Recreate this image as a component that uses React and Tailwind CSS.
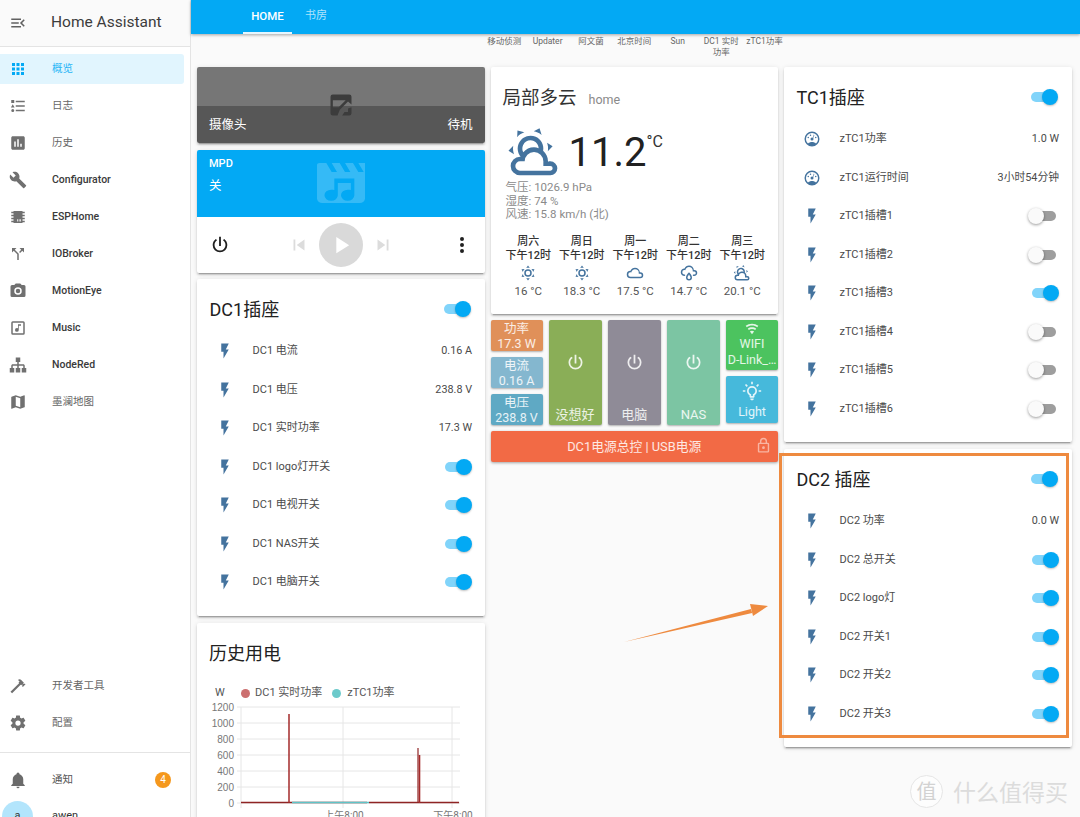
import React from "react";

const P = {
  menuOpen: "M21,15.61L19.59,17L14.58,12L19.59,7L21,8.39L17.44,12L21,15.61M3,6H16V8H3V6M3,13V11H13V13H3M3,18V16H16V18H3Z",
  grid: "M16,20H20V16H16M16,14H20V10H16M10,8H14V4H10M16,8H20V4H16M10,14H14V10H10M4,14H8V10H4M4,20H8V16H4M10,20H14V16H10M4,8H8V4H4V8Z",
  list: "M5,9.5L7.5,14H2.5L5,9.5M3,4H7V8H3V4M5,20A2,2 0 0,0 7,18A2,2 0 0,0 5,16A2,2 0 0,0 3,18A2,2 0 0,0 5,20M9,5V7H21V5H9M9,19H21V17H9V19M9,13H21V11H9V13Z",
  chart: "M19,3H5C3.9,3 3,3.9 3,5V19C3,20.1 3.9,21 5,21H19C20.1,21 21,20.1 21,19V5C21,3.9 20.1,3 19,3M9,17H7V10H9V17M13,17H11V7H13V17M17,17H15V13H17V17Z",
  wrench: "M22.7,19L13.6,9.9C14.5,7.6 14,4.9 12.1,3C10.1,1 7.1,0.6 4.7,1.7L9,6L6,9L1.6,4.7C0.4,7.1 0.9,10.1 2.9,12.1C4.8,14 7.5,14.5 9.8,13.6L18.9,22.7C19.3,23.1 19.9,23.1 20.3,22.7L22.6,20.4C23.1,20 23.1,19.3 22.7,19Z",
  chip: "M6,4H18V5H21V7H18V9H21V11H18V13H21V15H18V17H21V19H18V20H6V19H3V17H6V15H3V13H6V11H3V9H6V7H3V5H6V4M11,15V18H12V15H11M13,15V18H14V15H13M15,15V18H16V15H15Z",
  split: "M14,4L16.29,6.29L13.41,9.17L14.83,10.59L17.71,7.71L20,10V4M10,4H4V10L6.29,7.71L11,12.41V20H13V11.59L7.71,6.29",
  camera: "M4,4H7L9,2H15L17,4H20A2,2 0 0,1 22,6V18A2,2 0 0,1 20,20H4A2,2 0 0,1 2,18V6A2,2 0 0,1 4,4M12,7A5,5 0 0,0 7,12A5,5 0 0,0 12,17A5,5 0 0,0 17,12A5,5 0 0,0 12,7M12,9A3,3 0 0,1 15,12A3,3 0 0,1 12,15A3,3 0 0,1 9,12A3,3 0 0,1 12,9Z",
  music: "M16,9H13V14.5A2.5,2.5 0 0,1 10.5,17A2.5,2.5 0 0,1 8,14.5A2.5,2.5 0 0,1 10.5,12C11.07,12 11.58,12.19 12,12.5V7H16V9M19,3A2,2 0 0,1 21,5V19A2,2 0 0,1 19,21H5A2,2 0 0,1 3,19V5A2,2 0 0,1 5,3H19M5,5V19H19V5H5Z",
  sitemap: "M9,2V8H11V11H5C3.89,11 3,11.89 3,13V16H1V22H7V16H5V13H11V16H9V22H15V16H13V13H19V16H17V22H23V16H21V13C21,11.89 20.11,11 19,11H13V8H15V2H9Z",
  map: "M15,19L9,16.89V5L15,7.11M20.5,3C20.44,3 20.39,3 20.34,3L15,5.1L9,3L3.36,4.9C3.15,4.97 3,5.15 3,5.38V20.5A0.5,0.5 0 0,0 3.5,21C3.55,21 3.61,21 3.66,20.97L9,18.9L15,21L20.64,19.1C20.85,19 21,18.85 21,18.62V3.5A0.5,0.5 0 0,0 20.5,3Z",
  hammer: "M2 19.63L13.43 8.2L12.72 7.5L14.14 6.07L12 3.89C13.2 2.7 15.09 2.7 16.27 3.89L19.87 7.5L18.45 8.91H21.29L22 9.62L18.45 13.21L17.74 12.5V9.62L16.27 11.04L15.56 10.33L4.13 21.76L2 19.63Z",
  cog: "M12,15.5A3.5,3.5 0 0,1 8.5,12A3.5,3.5 0 0,1 12,8.5A3.5,3.5 0 0,1 15.5,12A3.5,3.5 0 0,1 12,15.5M19.43,12.97C19.47,12.65 19.5,12.33 19.5,12C19.5,11.67 19.47,11.34 19.43,11L21.54,9.37C21.73,9.22 21.78,8.95 21.66,8.73L19.66,5.27C19.54,5.05 19.27,4.96 19.05,5.05L16.56,6.05C16.04,5.66 15.5,5.32 14.87,5.07L14.5,2.42C14.46,2.18 14.25,2 14,2H10C9.75,2 9.54,2.18 9.5,2.42L9.13,5.07C8.5,5.32 7.96,5.66 7.44,6.05L4.95,5.05C4.73,4.96 4.46,5.05 4.34,5.27L2.34,8.73C2.21,8.95 2.27,9.22 2.46,9.37L4.57,11C4.53,11.34 4.5,11.67 4.5,12C4.5,12.33 4.53,12.65 4.57,12.97L2.46,14.63C2.27,14.78 2.21,15.05 2.34,15.27L4.34,18.73C4.46,18.95 4.73,19.03 4.95,18.95L7.44,17.94C7.96,18.34 8.5,18.68 9.13,18.93L9.5,21.58C9.54,21.82 9.75,22 10,22H14C14.25,22 14.46,21.82 14.5,21.58L14.87,18.93C15.5,18.67 16.04,18.34 16.56,17.94L19.05,18.95C19.27,19.03 19.54,18.95 19.66,18.73L21.66,15.27C21.78,15.05 21.73,14.78 21.54,14.63L19.43,12.97Z",
  bell: "M21,19V20H3V19L5,17V11C5,7.9 7.03,5.17 10,4.29C10,4.19 10,4.1 10,4A2,2 0 0,1 12,2A2,2 0 0,1 14,4C14,4.1 14,4.19 14,4.29C16.97,5.17 19,7.9 19,11V17L21,19M14,21A2,2 0 0,1 12,23A2,2 0 0,1 10,21",
  power: "M16.56,5.44L15.11,6.89C16.84,7.94 18,9.83 18,12A6,6 0 0,1 12,18A6,6 0 0,1 6,12C6,9.83 7.16,7.94 8.88,6.88L7.44,5.44C5.36,6.88 4,9.28 4,12A8,8 0 0,0 12,20A8,8 0 0,0 20,12C20,9.28 18.64,6.88 16.56,5.44M13,3H11V13H13",
  flash: "M7,2V13H10V22L17,10H13L17,2H7Z",
  gauge: "M17.3,18C19,16.5 20,14.4 20,12A8,8 0 0,0 12,4A8,8 0 0,0 4,12C4,14.4 5,16.5 6.7,18C8.2,16.7 10,16 12,16C14,16 15.9,16.7 17.3,18M12,2A10,10 0 0,1 22,12A10,10 0 0,1 12,22A10,10 0 0,1 2,12A10,10 0 0,1 12,2M7,9A1,1 0 0,1 8,10A1,1 0 0,1 7,11A1,1 0 0,1 6,10A1,1 0 0,1 7,9M10,6A1,1 0 0,1 11,7A1,1 0 0,1 10,8A1,1 0 0,1 9,7A1,1 0 0,1 10,6M17,9A1,1 0 0,1 18,10A1,1 0 0,1 17,11A1,1 0 0,1 16,10A1,1 0 0,1 17,9M14.4,6.1C14.9,6.3 15.1,6.9 15,7.4L13.6,10.8C13.8,11.1 14,11.5 14,12A2,2 0 0,1 12,14A2,2 0 0,1 10,12A2,2 0 0,1 12,10C12.5,10 12.9,10.2 13.2,10.4L14.4,6.1Z",
  prev: "M6,18V6H8V18H6M9.5,12L18,6V18L9.5,12Z",
  next: "M16,18H18V6H16M6,18L14.5,12L6,6V18Z",
  play: "M8,5.14V19.14L19,12.14L8,5.14Z",
  dots: "M12,16A2,2 0 0,1 14,18A2,2 0 0,1 12,20A2,2 0 0,1 10,18A2,2 0 0,1 12,16M12,10A2,2 0 0,1 14,12A2,2 0 0,1 12,14A2,2 0 0,1 10,12A2,2 0 0,1 12,10M12,4A2,2 0 0,1 14,6A2,2 0 0,1 12,8A2,2 0 0,1 10,6A2,2 0 0,1 12,4Z",
  wifi: "M12,21L15.6,16.2C14.6,15.45 13.35,15 12,15C10.65,15 9.4,15.45 8.4,16.2L12,21M12,3C7.95,3 4.21,4.34 1.2,6.6L3,9C5.5,7.12 8.62,6 12,6C15.38,6 18.5,7.12 21,9L22.8,6.6C19.79,4.34 16.05,3 12,3M12,9C9.3,9 6.81,9.89 4.8,11.4L6.6,13.8C8.1,12.67 9.97,12 12,12C14.03,12 15.9,12.67 17.4,13.8L19.2,11.4C17.19,9.89 14.7,9 12,9Z",
  bulb: "M20,11H23V13H20V11M1,11H4V13H1V11M13,1V4H11V1H13M4.92,3.5L7.05,5.64L5.63,7.05L3.5,4.93L4.92,3.5M16.95,5.63L19.07,3.5L20.5,4.93L18.37,7.05L16.95,5.63M12,6A6,6 0 0,1 18,12C18,14.22 16.79,16.16 15,17.2V19A1,1 0 0,1 14,20H10A1,1 0 0,1 9,19V17.2C7.21,16.16 6,14.22 6,12A6,6 0 0,1 12,6M14,21V22A1,1 0 0,1 13,23H11A1,1 0 0,1 10,22V21H14M11,18H13V15.87C14.73,15.43 16,13.86 16,12A4,4 0 0,0 12,8A4,4 0 0,0 8,12C8,13.86 9.27,15.43 11,15.87V18Z",
  lock: "M12,17C10.89,17 10,16.1 10,15C10,13.89 10.89,13 12,13A2,2 0 0,1 14,15A2,2 0 0,1 12,17M18,20V10H6V20H18M18,8A2,2 0 0,1 20,10V20A2,2 0 0,1 18,22H6C4.89,22 4,21.1 4,20V10C4,8.89 4.89,8 6,8H7V6A5,5 0 0,1 12,1A5,5 0 0,1 17,6V8H18M12,3A3,3 0 0,0 9,6V8H15V6A3,3 0 0,0 12,3Z",
  partly: "M12.74,5.47C15.1,6.5 16.35,9.03 15.92,11.46C17.19,12.56 18,14.19 18,16V16.17C18.31,16.06 18.65,16 19,16A3,3 0 0,1 22,19A3,3 0 0,1 19,22H6A4,4 0 0,1 2,18A4,4 0 0,1 6,14H6.27C5,12.45 4.6,10.24 5.5,8.26C6.72,5.5 9.97,4.24 12.74,5.47M11.93,7.3C10.16,6.5 8.09,7.31 7.31,9.07C6.85,10.09 6.93,11.22 7.41,12.13C8.5,10.83 10.16,10 12,10C12.7,10 13.38,10.12 14,10.34C13.94,9.06 13.18,7.86 11.93,7.3M13.55,3.64C13,3.4 12.45,3.23 11.89,3.12L14.37,1.82L15.27,4.71C14.78,4.27 14.19,3.91 13.55,3.64M6.09,4.44C5.6,4.79 5.17,5.19 4.8,5.63L4.91,2.82L7.87,3.5C7.25,3.71 6.65,4.03 6.09,4.44M18,9.71C17.91,9.12 17.78,8.55 17.59,8L19.97,9.5L17.92,11.73C18.03,11.08 18.05,10.4 18,9.71M3.04,11.3C3.11,11.9 3.24,12.47 3.43,13L1.06,11.5L3.1,9.28C3,9.93 2.97,10.61 3.04,11.3M19,18H16V16A4,4 0 0,0 12,12A4,4 0 0,0 8,16H6A2,2 0 0,0 4,18A2,2 0 0,0 6,20H19A1,1 0 0,0 20,19A1,1 0 0,0 19,18Z",
  sunny: "M12,7A5,5 0 0,1 17,12A5,5 0 0,1 12,17A5,5 0 0,1 7,12A5,5 0 0,1 12,7M12,9A3,3 0 0,0 9,12A3,3 0 0,0 12,15A3,3 0 0,0 15,12A3,3 0 0,0 12,9M12,2L14.39,5.42C13.65,5.15 12.84,5 12,5C11.16,5 10.35,5.15 9.61,5.42L12,2M3.34,7L7.5,6.65C6.9,7.16 6.36,7.78 5.94,8.5C5.5,9.24 5.25,10 5.11,10.79L3.34,7M3.36,17L5.12,13.23C5.26,14 5.53,14.78 5.95,15.5C6.37,16.24 6.91,16.86 7.5,17.37L3.36,17M20.65,7L18.88,10.79C18.74,10 18.47,9.23 18.05,8.5C17.63,7.78 17.1,7.15 16.5,6.64L20.65,7M20.64,17L16.5,17.36C17.09,16.85 17.62,16.22 18.04,15.5C18.46,14.77 18.73,14 18.87,13.21L20.64,17M12,22L9.59,18.56C10.33,18.83 11.14,19 12,19C12.82,19 13.63,18.83 14.37,18.56L12,22Z",
  cloudy: "M6,19A5,5 0 0,1 1,14A5,5 0 0,1 6,9C7,6.65 9.3,5 12,5C15.43,5 18.24,7.66 18.5,11.03L19,11A4,4 0 0,1 23,15A4,4 0 0,1 19,19H6M19,13H17V12A5,5 0 0,0 12,7C9.5,7 7.45,8.82 7.06,11.19C6.73,11.07 6.37,11 6,11A3,3 0 0,0 3,14A3,3 0 0,0 6,17H19A2,2 0 0,0 21,15A2,2 0 0,0 19,13Z",
  rainy: "M6,14.03A1,1 0 0,1 7,15.03C7,15.58 6.55,16.03 6,16.03C3.24,16.03 1,13.79 1,11.03C1,8.27 3.24,6.03 6,6.03C7,3.68 9.3,2.03 12,2.03C15.43,2.03 18.24,4.69 18.5,8.06L19,8.03A4,4 0 0,1 23,12.03C23,14.23 21.21,16.03 19,16.03H18C17.45,16.03 17,15.58 17,15.03C17,14.47 17.45,14.03 18,14.03H19A2,2 0 0,0 21,12.03A2,2 0 0,0 19,10.03H17V9.03C17,6.27 14.76,4.03 12,4.03C9.5,4.03 7.45,5.84 7.06,8.21C6.73,8.09 6.37,8.03 6,8.03A3,3 0 0,0 3,11.03A3,3 0 0,0 6,14.03M12,14.15C12.18,14.39 12.37,14.66 12.56,14.94C13,15.56 14,17.08 14,18C14,19.11 13.1,20 12,20A2,2 0 0,1 10,18C10,17.08 11,15.56 11.43,14.94C11.63,14.66 11.82,14.39 12,14.15M12,11.03L10.5,12.8C10.5,12.8 8,15.66 8,18A4,4 0 0,0 12,22A4,4 0 0,0 16,18C16,15.66 13.5,12.8 13.5,12.8L12,11.03Z",
  broken: "M5,3H19A2,2 0 0,1 21,5V11.5L18,9L14,13L11,16L9,21H5A2,2 0 0,1 3,19V5A2,2 0 0,1 5,3M5,8V14H10L16,8H5M21,14V19A2,2 0 0,1 19,21H13L15,18H18V15L21,14Z",
  clapper: "M4,3H6.5L8.5,7H10.5L8.5,3H11.5L13.5,7H15.5L13.5,3H16.5L18.5,7H20.5L18.5,3H21V19A2,2 0 0,1 19,21H5A2,2 0 0,1 3,19V4A1,1 0 0,1 4,3M17,10H9.5V15.2C9.1,15.05 8.7,15 8.3,15A2.5,2.5 0 1,0 10.8,17.5V12H15.7V15.2C15.3,15.05 14.9,15 14.5,15A2.5,2.5 0 1,0 17,17.5V10Z",
};

function Icon({ d, className }) {
  return (
    <svg viewBox="0 0 24 24" className={className} fill="currentColor" fillRule="evenodd">
      <path d={d} />
    </svg>
  );
}

const NAV_TOP = [
  { icon: P.grid, label: "概览", active: true },
  { icon: P.list, label: "日志" },
  { icon: P.chart, label: "历史" },
  { icon: P.wrench, label: "Configurator", medium: true },
  { icon: P.chip, label: "ESPHome", medium: true },
  { icon: P.split, label: "IOBroker", medium: true },
  { icon: P.camera, label: "MotionEye", medium: true },
  { icon: P.music, label: "Music", medium: true },
  { icon: P.sitemap, label: "NodeRed", medium: true },
  { icon: P.map, label: "墨澜地图" },
];

const BADGES = ["移动侦测", "Updater", "阿文菌", "北京时间", "Sun", "DC1 实时 功率", "zTC1功率"];

const FORECAST = [
  { day: "周六", icon: P.sunny, temp: "16 °C" },
  { day: "周日", icon: P.sunny, temp: "18.3 °C" },
  { day: "周一", icon: P.cloudy, temp: "17.5 °C" },
  { day: "周二", icon: P.rainy, temp: "14.7 °C" },
  { day: "周三", icon: P.partly, temp: "20.1 °C" },
];

const DC1_ROWS = [
  { label: "DC1 电流", value: "0.16 A" },
  { label: "DC1 电压", value: "238.8 V" },
  { label: "DC1 实时功率", value: "17.3 W" },
  { label: "DC1 logo灯开关", on: true },
  { label: "DC1 电视开关", on: true },
  { label: "DC1 NAS开关", on: true },
  { label: "DC1 电脑开关", on: true },
];

const TC1_ROWS = [
  { label: "zTC1功率", value: "1.0 W", icon: P.gauge },
  { label: "zTC1运行时间", value: "3小时54分钟", icon: P.gauge },
  { label: "zTC1插槽1", on: false },
  { label: "zTC1插槽2", on: false },
  { label: "zTC1插槽3", on: true },
  { label: "zTC1插槽4", on: false },
  { label: "zTC1插槽5", on: false },
  { label: "zTC1插槽6", on: false },
];

const DC2_ROWS = [
  { label: "DC2 功率", value: "0.0 W" },
  { label: "DC2 总开关", on: true },
  { label: "DC2 logo灯", on: true },
  { label: "DC2 开关1", on: true },
  { label: "DC2 开关2", on: true },
  { label: "DC2 开关3", on: true },
];

const CARD = "bg-white rounded-[2px] shadow-[0_2px_2px_rgba(0,0,0,0.14),0_1px_5px_rgba(0,0,0,0.12),0_3px_1px_-2px_rgba(0,0,0,0.2)]";

function Toggle({ on }) {
  if (on) {
    return (
      <div className="relative w-[27px] h-[16px] flex items-center">
        <div className="w-[22px] h-[10px] rounded-full bg-[#81d4fa]" />
        <div className="absolute right-0 top-0 w-[16px] h-[16px] rounded-full bg-[#03a9f4] shadow-[0_1px_2px_rgba(0,0,0,0.25)]" />
      </div>
    );
  }
  return (
    <div className="relative w-[28px] h-[16px] mr-[3px] flex items-center justify-end">
      <div className="w-[22px] h-[10px] rounded-full bg-[#9e9e9e]" />
      <div className="absolute left-0 top-0 w-[16px] h-[16px] rounded-full bg-[#fafafa] shadow-[0_1px_3px_rgba(0,0,0,0.4)]" />
    </div>
  );
}

function EntityCard({ title, rows, className }) {
  return (
    <div className={`${CARD} ${className}`}>
      <div className="h-[53px] pl-[12.5px] pr-[13.5px] pt-[7px] flex items-center justify-between">
        <div className="text-[18px] text-[#212121]">{title}</div>
        <Toggle on />
      </div>
      <div className="pr-[12.5px]">
        {rows.map((r) => (
          <div key={r.label} className="h-[38.5px] flex items-center">
            <div className="w-[55.5px] flex justify-center">
              <Icon d={r.icon || P.flash} className="w-[18px] h-[18px] text-[#44739e]" />
            </div>
            <div className="text-[11px] text-[#4a4a4a] flex-1">{r.label}</div>
            {r.value ? (
              <div className="text-[10.8px] text-[#4a4a4a]">{r.value}</div>
            ) : (
              <Toggle on={r.on} />
            )}
          </div>
        ))}
      </div>
    </div>
  );
}

function NavItem({ icon, label, active, medium }) {
  return (
    <div className="h-[37px] flex items-center">
      <div className={`w-[184px] h-[30px] flex items-center rounded-r-[3px] ${active ? "bg-[#e1f5fe]" : ""}`}>
        <div className="w-[52px] pl-[9px]">
          <Icon d={icon} className={`w-[18px] h-[18px] ${active ? "text-[#03a9f4]" : "text-[#707070]"}`} />
        </div>
        <div className={`text-[10.5px] ${active ? "text-[#29b6f6]" : medium ? "text-[#3a3a3a] font-medium" : "text-[#666]"}`}>
          {label}
        </div>
      </div>
    </div>
  );
}

function Sidebar() {
  return (
    <aside className="w-[191px] shrink-0 h-full flex flex-col bg-white border-r border-[#e4e4e4]">
      <div className="h-[47px] shrink-0 flex items-center bg-[#fafafa] border-b border-[#e4e4e4]">
        <div className="w-[51px] pl-[9px]">
          <Icon d={P.menuOpen} className="w-[18px] h-[18px] text-[#616161]" />
        </div>
        <div className="text-[15.5px] text-[#3c3c3c]">Home Assistant</div>
      </div>
      <nav className="pt-[3px] flex-1">
        {NAV_TOP.map((n) => (
          <NavItem key={n.label} {...n} />
        ))}
      </nav>
      <div className="pb-[11px]">
        <NavItem icon={P.hammer} label="开发者工具" />
        <NavItem icon={P.cog} label="配置" />
      </div>
      <div className="border-t border-[#e4e4e4] pt-[8px] h-[65px] shrink-0">
        <div className="h-[37px] flex items-center">
          <div className="w-[52px] pl-[9px]">
            <Icon d={P.bell} className="w-[18px] h-[18px] text-[#6b6b6b]" />
          </div>
          <div className="flex-1 text-[10.5px] text-[#555]">通知</div>
          <div className="w-[16px] h-[16px] mr-[19px] rounded-full bg-[#f5981d] text-white text-[10px] flex items-center justify-center">4</div>
        </div>
        <div className="h-[37px] flex items-center">
          <div className="w-[52px] pl-[2px]">
            <div className="w-[31px] h-[31px] rounded-full bg-[#b3e5fc] text-[#333] text-[11px] flex items-center justify-center">a</div>
          </div>
          <div className="text-[11px] text-[#333]">awen</div>
        </div>
      </div>
    </aside>
  );
}

function Weather() {
  return (
    <div className={`${CARD} h-[247px] px-[12px]`}>
      <div className="h-[60px] pt-[3px] flex items-center">
        <span className="text-[18.5px] text-[#333]">局部多云</span>
        <span className="ml-[12px] mt-[3px] text-[12.5px] text-[#8a8a8a]">home</span>
      </div>
      <div className="flex items-start h-[54px]">
        <Icon d={P.partly} className="w-[56px] h-[56px] -mt-[3px] text-[#44739e] ml-[3px]" />
        <div className="ml-[7px] mt-[2px] text-[40px] leading-[48px] text-[#212121]">11.2</div>
        <div className="text-[16px] leading-[22px] mt-[4px] text-[#333]">°C</div>
      </div>
      <div className="ml-[3px] text-[11.5px] leading-[13.5px] text-[#8a8a8a]">
        <div>气压: 1026.9 hPa</div>
        <div>湿度: 74 %</div>
        <div>风速: 15.8 km/h (北)</div>
      </div>
      <div className="mt-[13px] -ml-[1px] -mr-[3px] grid grid-cols-5">
        {FORECAST.map((f) => (
          <div key={f.day} className="flex flex-col items-center">
            <div className="text-[11px] leading-[14px] font-medium text-[#333] whitespace-nowrap text-center">
              {f.day}
              <br />
              下午12时
            </div>
            <Icon d={f.icon} className="w-[18px] h-[18px] mt-[1px] text-[#44739e]" />
            <div className="text-[11.5px] mt-[1px] text-[#555]">{f.temp}</div>
          </div>
        ))}
      </div>
    </div>
  );
}

function Tile({ className, children }) {
  return (
    <div className={`rounded-[2px] text-white/85 shadow-[0_1px_2px_rgba(0,0,0,0.3)] flex flex-col items-center ${className}`}>
      {children}
    </div>
  );
}

function SmallTile({ title, value, className }) {
  return (
    <Tile className={`h-[31px] text-[12.5px] leading-[15px] justify-center ${className}`}>
      <div>{title}</div>
      <div>{value}</div>
    </Tile>
  );
}

function BigTile({ label, className }) {
  return (
    <Tile className={`flex-1 h-[105px] ${className}`}>
      <Icon d={P.power} className="w-[21px] h-[21px] mt-[32px]" />
      <div className="mt-auto mb-[1px] text-[13px]">{label}</div>
    </Tile>
  );
}

function Buttons() {
  return (
    <div className="flex flex-col gap-[6px]">
      <div className="flex gap-[6px]">
        <div className="w-[52px] flex flex-col gap-[6px]">
          <SmallTile title="功率" value="17.3 W" className="bg-[#e09059]" />
          <SmallTile title="电流" value="0.16 A" className="bg-[#84b7cf]" />
          <SmallTile title="电压" value="238.8 V" className="bg-[#5fa9c4]" />
        </div>
        <BigTile label="没想好" className="bg-[#8aae57]" />
        <BigTile label="电脑" className="bg-[#8f8b97]" />
        <BigTile label="NAS" className="bg-[#7cc5a3]" />
        <div className="w-[52px] flex flex-col gap-[6px]">
          <Tile className="h-[50px] bg-[#4cc35f] text-[12.5px] leading-[16px]">
            <Icon d={P.wifi} className="w-[14px] h-[14px] mt-[2px]" />
            <div>WIFI</div>
            <div className="w-full text-center whitespace-nowrap overflow-hidden">D-Link_…</div>
          </Tile>
          <Tile className="h-[47px] bg-[#46b9db]">
            <Icon d={P.bulb} className="w-[20px] h-[20px] mt-[5px]" />
            <div className="text-[12.5px] leading-[16px] mt-[3px]">Light</div>
          </Tile>
        </div>
      </div>
      <div className="relative h-[31px] pt-[1px] rounded-[2px] bg-[#f26a45] text-white/85 text-[12.8px] flex items-center justify-center shadow-[0_1px_3px_rgba(0,0,0,0.35)]">
        DC1电源总控 | USB电源
        <Icon d={P.lock} className="absolute right-[6px] top-[6px] w-[17px] h-[17px] text-white/50" />
      </div>
    </div>
  );
}

function Camera() {
  return (
    <div className={`${CARD} relative h-[76px] overflow-hidden`}>
      <div className="h-[39px] bg-[#767676]" />
      <div className="h-[37px] bg-[#575757] flex items-center justify-between px-[12px] pt-[1px] text-[12.5px] text-white">
        <span>摄像头</span>
        <span>待机</span>
      </div>
      <Icon d={P.broken} className="absolute left-[130px] top-[24px] w-[28px] h-[28px] text-[#3c3c3c]" />
    </div>
  );
}

function Media() {
  return (
    <div className={`${CARD} h-[123px] overflow-hidden`}>
      <div className="relative h-[67px] bg-[#03a9f4] px-[12px] text-white">
        <div className="pt-[6px] text-[11px] font-medium">MPD</div>
        <div className="mt-[5px] text-[12.5px]">关</div>
        <svg viewBox="3 3 18 18" preserveAspectRatio="none" className="absolute left-[120px] top-[13px] w-[48px] h-[40px] text-white/20" fill="currentColor" fillRule="evenodd">
          <path d={P.clapper} />
        </svg>
      </div>
      <div className="h-[56px] relative flex items-center justify-center text-[#212121]">
        <Icon d={P.power} className="absolute left-[12px] top-[17px] w-[22px] h-[22px]" />
        <Icon d={P.prev} className="w-[22px] h-[22px] text-[#dcdcdc]" />
        <div className="mx-[9px] w-[44px] h-[44px] rounded-full bg-[#d9d9d9] flex items-center justify-center">
          <Icon d={P.play} className="w-[28px] h-[28px] text-white" />
        </div>
        <Icon d={P.next} className="w-[22px] h-[22px] text-[#dcdcdc]" />
        <Icon d={P.dots} className="absolute right-[11px] top-[16px] w-[24px] h-[24px]" />
      </div>
    </div>
  );
}

function History() {
  const gridY = [707, 723, 739, 755, 771, 787, 803];
  const labels = ["1200", "1000", "800", "600", "400", "200", "0"];
  return (
    <div className={`${CARD} h-[220px]`}>
      <div className="h-[53px] pl-[12px] pt-[8px] flex items-center text-[18px] text-[#212121]">历史用电</div>
      <div className="h-[24px] pl-[18px] pt-[12px] flex items-center text-[11px] text-[#555]">
        <span className="w-[26px]">W</span>
        <span className="w-[9px] h-[9px] rounded-full bg-[#cc6f6f]" />
        <span className="ml-[5px]">DC1 实时功率</span>
        <span className="ml-[10px] w-[9px] h-[9px] rounded-full bg-[#6ccacb]" />
        <span className="ml-[6px]">zTC1功率</span>
      </div>
      <svg width="288" height="125" viewBox="197 700 288 125" className="block">
        {gridY.map((y, i) => (
          <g key={y}>
            <line x1="237" x2="460" y1={y} y2={y} stroke="#e6e6e6" />
            <text x="234" y={y + 3.5} textAnchor="end" fontSize="10" fill="#777" fontFamily="Liberation Sans, sans-serif">
              {labels[i]}
            </text>
          </g>
        ))}
        {[241, 343, 452].map((x) => (
          <line key={x} x1={x} x2={x} y1="707" y2="808" stroke="#e6e6e6" />
        ))}
        <path d="M241 802.5H367" stroke="#8f2424" strokeWidth="1.5" />
        <path d="M369 802.5H459" stroke="#8f2424" strokeWidth="1.5" />
        <path d="M292 802.5H369" stroke="#5fc4c8" strokeWidth="1.5" />
        <path d="M289 803V714" stroke="#a32a2a" strokeWidth="1.5" />
        <path d="M418 803V748" stroke="#8f2424" strokeWidth="1.2" />
        <path d="M419.5 803V755" stroke="#a32a2a" strokeWidth="1.6" />
        <text x="344" y="819" textAnchor="middle" fontSize="10" fill="#777">上午8:00</text>
        <text x="453" y="819" textAnchor="middle" fontSize="10" fill="#777">下午8:00</text>
      </svg>
    </div>
  );
}

export default function App() {
  return (
    <div className="relative w-[1080px] h-[817px] overflow-hidden flex bg-[#fafafa] font-[Roboto,'Noto_Sans_CJK_SC',sans-serif]">
      <Sidebar />
      <main className="flex-1 min-w-0">
        <header className="h-[34px] bg-[#03a9f4] shadow-[0_1px_3px_rgba(0,0,0,0.35)] flex pl-[52px] text-white">
          <div className="relative w-[49px] flex justify-center pt-[8px] text-[11.5px] font-medium">
            HOME
            <div className="absolute left-0 right-0 bottom-0 h-[2px] bg-white/90" />
          </div>
          <div className="ml-[13px] pt-[8px] text-[11px] text-white/70">书房</div>
        </header>

        <div className="h-[33px] pt-[2px] pl-[291.5px] flex">
          {BADGES.map((b) => (
            <div key={b} className="w-[43.4px] shrink-0 text-center text-[8.5px] leading-[11px] text-[#666]">
              {b}
            </div>
          ))}
        </div>

        <div className="flex gap-[6px] pl-[6px]">
          <div className="w-[287.5px] flex flex-col gap-[6.5px]">
            <Camera />
            <Media />
            <EntityCard title="DC1插座" rows={DC1_ROWS} className="h-[337px]" />
            <History />
          </div>
          <div className="w-[287.5px] flex flex-col gap-[6px]">
            <Weather />
            <Buttons />
          </div>
          <div className="w-[287.5px] flex flex-col gap-[7px]">
            <EntityCard title="TC1插座" rows={TC1_ROWS} className="h-[375px]" />
            <EntityCard title="DC2 插座" rows={DC2_ROWS} className="h-[298px]" />
          </div>
        </div>
      </main>

      {/* annotation on top of the screenshot */}
      <div className="absolute left-[779px] top-[453px] w-[290px] h-[285px] border-[3px] border-[#ee8a3f]" />
      <svg className="absolute left-[620px] top-[600px] w-[150px] h-[46px]" viewBox="620 600 150 46">
        <path d="M624 642L751 609L752.2 613Z" fill="#ee8a3f" />
        <path d="M768 606L750 604L753 616Z" fill="#ee8a3f" />
      </svg>

      {/* watermark */}
      <div className="absolute left-[910px] top-[775px] w-[33px] h-[33px] rounded-full border border-[#e6e6e6] bg-white/60 flex items-center justify-center text-[20px] text-[#d2d2d2]">
        值
      </div>
      <div className="absolute left-[953px] top-[780px] text-[23px] leading-[28px] text-[#dcdcdc]">什么值得买</div>
    </div>
  );
}
